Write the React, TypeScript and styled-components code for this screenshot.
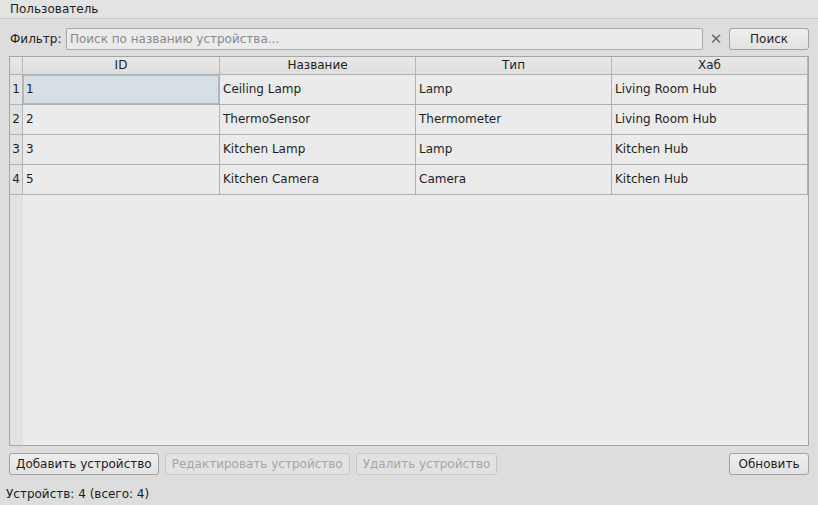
import styled, { createGlobalStyle } from 'styled-components';

type Device = {
  id: number;
  name: string;
  type: string;
  hub: string;
};

const devices: Device[] = [
  { id: 1, name: 'Ceiling Lamp', type: 'Lamp', hub: 'Living Room Hub' },
  { id: 2, name: 'ThermoSensor', type: 'Thermometer', hub: 'Living Room Hub' },
  { id: 3, name: 'Kitchen Lamp', type: 'Lamp', hub: 'Kitchen Hub' },
  { id: 5, name: 'Kitchen Camera', type: 'Camera', hub: 'Kitchen Hub' },
];

const columns = ['ID', 'Название', 'Тип', 'Хаб'];

const App = () => {
  return (
    <>
      <GlobalStyle />
      <StWindow>
        <StMenuBar>Пользователь</StMenuBar>
        <StContent>
          <StFilterRow>
            <StLabel>Фильтр:</StLabel>
            <StSearchInput placeholder="Поиск по названию устройства..." />
            <StClear>✕</StClear>
            <StButton $width={80}>Поиск</StButton>
          </StFilterRow>

          <StTable>
            <StHeaderRow>
              <StCorner />
              {columns.map((col) => (
                <StHeaderCell key={col}>{col}</StHeaderCell>
              ))}
            </StHeaderRow>
            {devices.map((device, index) => (
              <StRow key={device.id}>
                <StRowNumber>{index + 1}</StRowNumber>
                <StCell $selected={index === 0}>{device.id}</StCell>
                <StCell>{device.name}</StCell>
                <StCell>{device.type}</StCell>
                <StCell>{device.hub}</StCell>
              </StRow>
            ))}
            <StFiller>
              <StFillerHeader />
              <div />
            </StFiller>
          </StTable>

          <StActionRow>
            <StButton>Добавить устройство</StButton>
            <StButton disabled>Редактировать устройство</StButton>
            <StButton disabled>Удалить устройство</StButton>
            <StSpacer />
            <StButton $width={80}>Обновить</StButton>
          </StActionRow>
        </StContent>
        <StStatus>Устройств: 4 (всего: 4)</StStatus>
      </StWindow>
    </>
  );
};

export default App;

const GlobalStyle = createGlobalStyle`
  html, body {
    margin: 0;
    padding: 0;
    background: #dddddd;
  }
  * {
    box-sizing: border-box;
  }
`;

const StWindow = styled.main`
  display: flex;
  flex-direction: column;
  width: 818px;
  height: 505px;
  background: #dddddd;
  color: #1e1e1e;
  font-family: 'DejaVu Sans', 'Noto Sans', sans-serif;
  font-size: 12px;
  overflow: hidden;
`;

const StMenuBar = styled.header`
  display: flex;
  align-items: center;
  height: 19px;
  padding: 0 0 1px 10px;
  background: #e3e3e3;
  border-bottom: 1px solid #c9c9c9;
`;

const StContent = styled.section`
  display: flex;
  flex-direction: column;
  flex: 1;
  padding: 9px 9px 0 9px;
`;

const StFilterRow = styled.div`
  display: flex;
  align-items: center;
  height: 22px;
`;

const StLabel = styled.span`
  margin-left: 1px;
  width: 56px;
`;

const StSearchInput = styled.input`
  width: 638px;
  height: 22px;
  padding: 0 3px;
  border: 1px solid #ababab;
  border-radius: 2px;
  background: #ebebeb;
  font-family: inherit;
  font-size: 12px;
  color: #1e1e1e;
  outline: none;

  &::placeholder {
    color: #8a8a8a;
  }
`;

const StClear = styled.span`
  display: flex;
  justify-content: center;
  width: 26px;
  font-size: 15px;
  font-weight: bold;
  color: #6a6a6a;
`;

const StButton = styled.button<{ $width?: number }>`
  height: 22px;
  width: ${({ $width }) => ($width ? `${$width}px` : 'auto')};
  padding: 0 6px;
  border: 1px solid #a3a3a3;
  border-radius: 3px;
  background: linear-gradient(#eeeeee, #e2e2e2);
  font-family: inherit;
  font-size: 12px;
  color: #1e1e1e;

  &:disabled {
    color: #a6a6a6;
    border-color: #c6c6c6;
    background: #e2e2e2;
  }
`;

const StTable = styled.div`
  display: flex;
  flex-direction: column;
  height: 390px;
  margin-top: 6px;
  border: 1px solid #a6a6a6;
  background: #ebebeb;
`;

const rowGrid = `
  display: grid;
  grid-template-columns: 13px 197px 196px 196px 196px;
`;

const StHeaderRow = styled.div`
  ${rowGrid}
  height: 18px;
  background: linear-gradient(#e7e7e7, #dfdfdf);
  border-bottom: 1px solid #b0b0b0;
`;

const StCorner = styled.div`
  border-right: 1px solid #b8b8b8;
`;

const StHeaderCell = styled.div`
  display: flex;
  justify-content: center;
  align-items: center;
  border-right: 1px solid #b8b8b8;
  padding-bottom: 1px;
`;

const StRow = styled.div`
  ${rowGrid}
  height: 30px;
`;

const StRowNumber = styled.div`
  display: flex;
  justify-content: center;
  align-items: center;
  padding-bottom: 1px;
  background: #e2e2e2;
  border-right: 1px solid #b4b4b4;
  border-bottom: 1px solid #b4b4b4;
`;

const StCell = styled.div<{ $selected?: boolean }>`
  display: flex;
  align-items: center;
  padding: 0 0 1px 3px;
  border-right: 1px solid #b0b0b0;
  border-bottom: 1px solid #b0b0b0;
  background: ${({ $selected }) => ($selected ? '#d6dee6' : 'transparent')};
  box-shadow: ${({ $selected }) => ($selected ? 'inset 0 0 0 1px #a9b9c8' : 'none')};
`;

const StFiller = styled.div`
  display: grid;
  grid-template-columns: 13px 1fr;
  flex: 1;
`;

const StFillerHeader = styled.div`
  background: #e2e2e2;
`;

const StActionRow = styled.div`
  display: flex;
  align-items: center;
  gap: 6px;
  height: 22px;
  margin-top: 7px;
`;

const StSpacer = styled.div`
  flex: 1;
`;

const StStatus = styled.footer`
  height: 24px;
  padding: 6px 0 0 6px;
`;
